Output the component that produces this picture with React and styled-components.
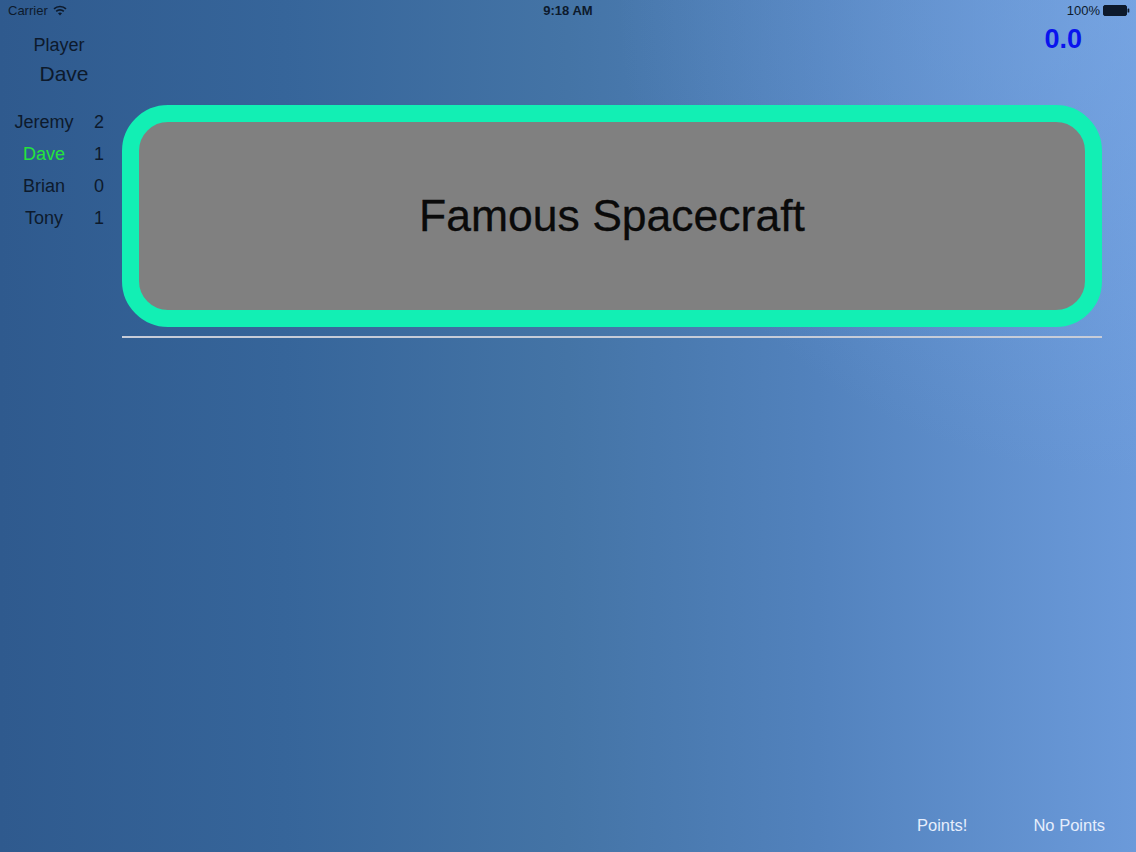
import styled, { createGlobalStyle } from "styled-components";

const GlobalStyle = createGlobalStyle`
  html, body {
    margin: 0;
    padding: 0;
  }
  body {
    font-family: "Liberation Sans", Arial, sans-serif;
  }
`;

const players = [
  { name: "Jeremy", score: 2 },
  { name: "Dave", score: 1, current: true },
  { name: "Brian", score: 0 },
  { name: "Tony", score: 1 },
];

export default function App() {
  return (
    <>
      <GlobalStyle />
      <Screen>
        <StatusBar>
          <Carrier>
            Carrier
            <WifiIcon />
          </Carrier>
          <Clock>9:18 AM</Clock>
          <Battery>
            100%
            <BatteryIcon />
          </Battery>
        </StatusBar>
        <Body>
          <Sidebar>
            <PlayerLabel>Player</PlayerLabel>
            <PlayerName>Dave</PlayerName>
            <ScoreList>
              {players.map((p) => (
                <ScoreRow key={p.name}>
                  <ScoreName $current={p.current}>{p.name}</ScoreName>
                  <ScoreValue>{p.score}</ScoreValue>
                </ScoreRow>
              ))}
            </ScoreList>
          </Sidebar>
          <Main>
            <Timer>0.0</Timer>
            <CategoryCard>
              <span>Famous Spacecraft</span>
            </CategoryCard>
            <Divider />
          </Main>
        </Body>
        <Footer>
          <FooterButton>Points!</FooterButton>
          <FooterButton>No Points</FooterButton>
        </Footer>
      </Screen>
    </>
  );
}

function WifiIcon() {
  return (
    <svg width="14" height="11" viewBox="0 0 14 11">
      <path d="M7 10.5 L9 8.3 A3 3 0 0 0 5 8.3 Z" fill="#0d1a2c" />
      <path
        d="M3.2 6.4 A5.4 5.4 0 0 1 10.8 6.4"
        stroke="#0d1a2c"
        strokeWidth="1.6"
        fill="none"
      />
      <path
        d="M1 3.9 A8.6 8.6 0 0 1 13 3.9"
        stroke="#0d1a2c"
        strokeWidth="1.6"
        fill="none"
      />
    </svg>
  );
}

function BatteryIcon() {
  return (
    <svg width="27" height="11" viewBox="0 0 27 11">
      <rect x="0.5" y="0.5" width="23" height="10" rx="1.5" fill="#0d1a2c" stroke="#0d1a2c" />
      <rect x="24.5" y="3.5" width="1.8" height="4" rx="0.6" fill="#0d1a2c" />
    </svg>
  );
}

const Screen = styled.div`
  width: 1136px;
  height: 852px;
  display: flex;
  flex-direction: column;
  overflow: hidden;
  background:
    radial-gradient(ellipse 520px 480px at 100% 0%, rgba(130, 175, 235, 0.45), rgba(130, 175, 235, 0) 100%),
    linear-gradient(90deg, #2f5a8e 0%, #36659a 25%, #4474a6 50%, #5282bd 72%, #6b9ada 100%);
  color: #0d1a2c;
`;

const StatusBar = styled.div`
  height: 20px;
  display: grid;
  grid-template-columns: 1fr auto 1fr;
  align-items: center;
  padding: 0 6px 0 8px;
  font-size: 13px;
  color: #0d1a2c;
`;

const Carrier = styled.div`
  display: flex;
  align-items: center;
  gap: 5px;
`;

const Clock = styled.div`
  font-weight: bold;
  padding-right: 2px;
`;

const Battery = styled.div`
  display: flex;
  align-items: center;
  justify-content: flex-end;
  gap: 3px;
`;

const Body = styled.div`
  flex: 1;
  display: flex;
`;

const Sidebar = styled.div`
  width: 122px;
  display: flex;
  flex-direction: column;
  padding-top: 14px;
`;

const PlayerLabel = styled.div`
  width: 118px;
  text-align: center;
  font-size: 18px;
  line-height: 22px;
`;

const PlayerName = styled.div`
  width: 118px;
  padding: 3px 0 0 10px;
  box-sizing: border-box;
  text-align: center;
  font-size: 21px;
  line-height: 30px;
`;

const ScoreList = styled.div`
  display: flex;
  flex-direction: column;
  margin-top: 17px;
`;

const ScoreRow = styled.div`
  display: grid;
  grid-template-columns: 88px 22px;
  height: 32px;
  align-items: center;
  font-size: 18px;
`;

const ScoreName = styled.div`
  text-align: center;
  color: ${(p) => (p.$current ? "#24e43c" : "#0d1a2c")};
`;

const ScoreValue = styled.div`
  text-align: center;
`;

const Main = styled.div`
  flex: 1;
  display: flex;
  flex-direction: column;
  padding-right: 34px;
`;

const Timer = styled.div`
  align-self: flex-end;
  margin-right: 20px;
  height: 85px;
  padding-top: 4px;
  box-sizing: border-box;
  font-size: 27px;
  font-weight: bold;
  color: #0a14ee;
`;

const CategoryCard = styled.div`
  height: 222px;
  box-sizing: border-box;
  border: 17px solid #12efb4;
  border-radius: 46px;
  background: #808080;
  display: flex;
  align-items: center;
  justify-content: center;
  font-size: 44.5px;
  color: #0a0a0a;
  -webkit-text-stroke: 0.3px #0a0a0a;
`;

const Divider = styled.div`
  margin-top: 9px;
  height: 2px;
  background: #c6ccd8;
`;

const Footer = styled.div`
  height: 54px;
  display: flex;
  justify-content: flex-end;
  align-items: center;
  gap: 66px;
  padding: 0 31px 0 0;
  box-sizing: border-box;
`;

const FooterButton = styled.button`
  background: none;
  border: none;
  padding: 0;
  font-family: "Liberation Sans", Arial, sans-serif;
  font-size: 16.5px;
  color: #e6eefc;
  cursor: pointer;
`;
